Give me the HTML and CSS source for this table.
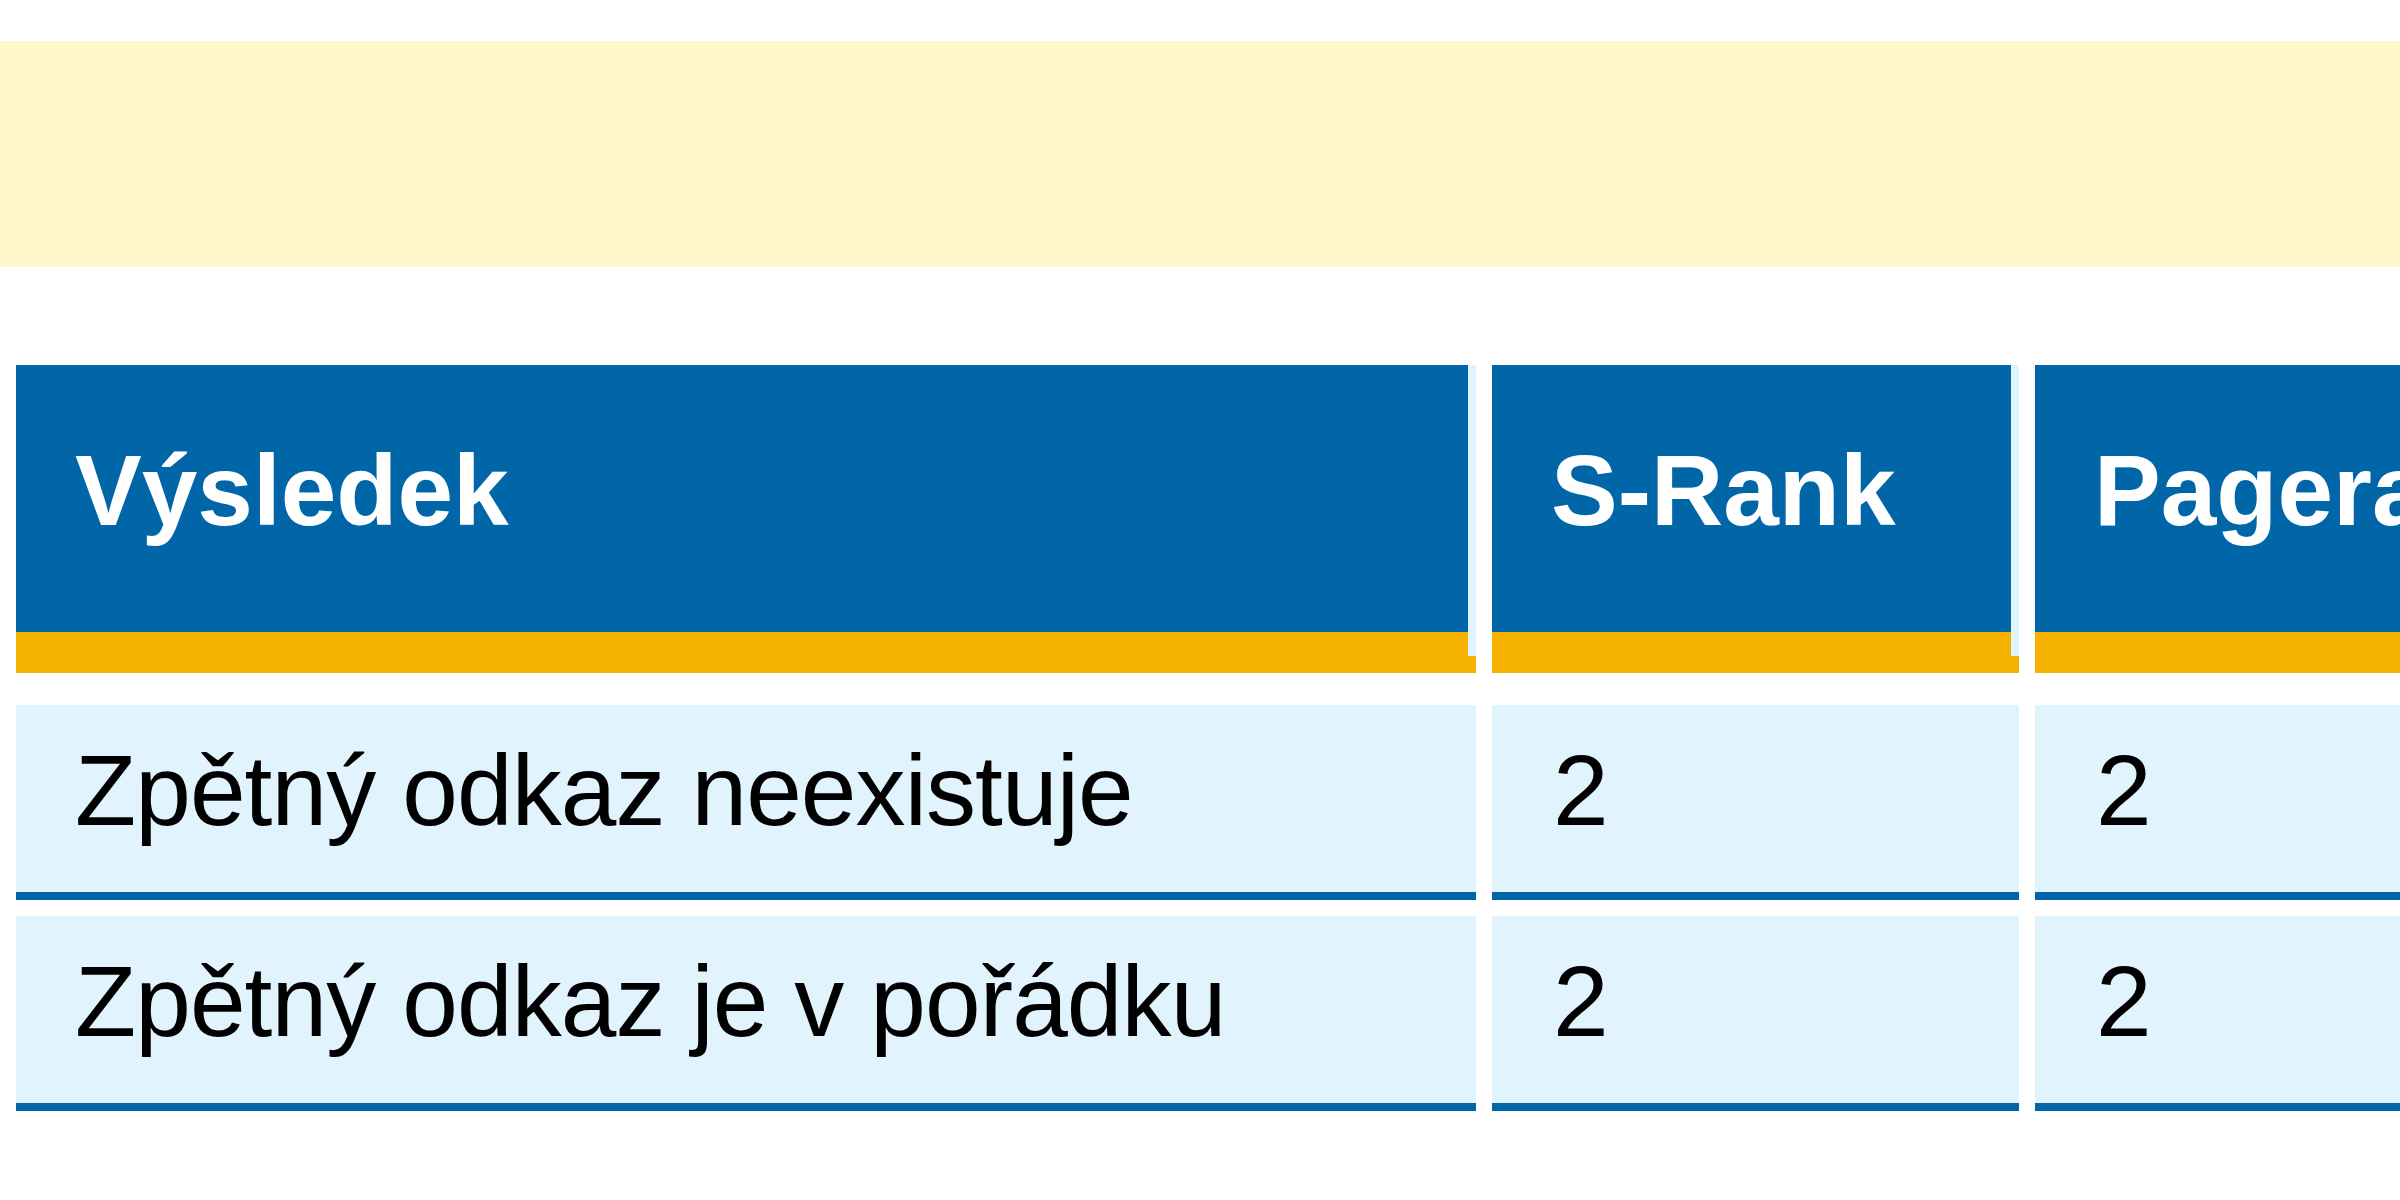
FILE: index.html
```html
<!DOCTYPE html>
<html lang="cs">
<head>
<meta charset="utf-8">
<title>Výsledek</title>
<link rel="stylesheet" href="styles.css">
</head>
<body>
<div class="notice"></div>
<div class="results">
  <div class="head">Výsledek</div>
  <div class="head">S-Rank</div>
  <div class="head">Pagerank</div>

  <div class="cell">Zpětný odkaz neexistuje</div>
  <div class="cell num">2</div>
  <div class="cell num">2</div>

  <div class="cell">Zpětný odkaz je v pořádku</div>
  <div class="cell num">2</div>
  <div class="cell num">2</div>
</div>
</body>
</html>
```

FILE: styles.css
```css
html, body {
  margin: 0;
  padding: 0;
  overflow: hidden;
  background: #ffffff;
  font-family: "Liberation Sans", Arial, sans-serif;
}

.notice {
  margin-top: 41px;
  height: 226px;
  background: #fff7cc;
}

.results {
  display: grid;
  grid-template-columns: 1460px 527px 527px;
  column-gap: 16px;
  row-gap: 16px;
  margin-top: 98px;
  padding-left: 16px;
  width: max-content;
}

.head {
  position: relative;
  background: #0066a8;
  color: #ffffff;
  font-weight: bold;
  font-size: 100px;
  line-height: 115px;
  padding: 68px 8px 84px 59px;
  border-bottom: 41px solid #f6b200;
  margin-bottom: 16px;
  white-space: nowrap;
}

.head::after {
  content: "";
  position: absolute;
  top: 0;
  right: 0;
  bottom: -24px;
  width: 8px;
  background: #e1f3fc;
}

.cell {
  background: #e1f3fc;
  color: #000000;
  font-size: 100px;
  line-height: 115px;
  letter-spacing: -0.9px;
  padding: 28px 0 44px 59px;
  border-bottom: 8px solid #0066a8;
  white-space: nowrap;
  overflow: hidden;
}

.num {
  padding-left: 61px;
}
```
